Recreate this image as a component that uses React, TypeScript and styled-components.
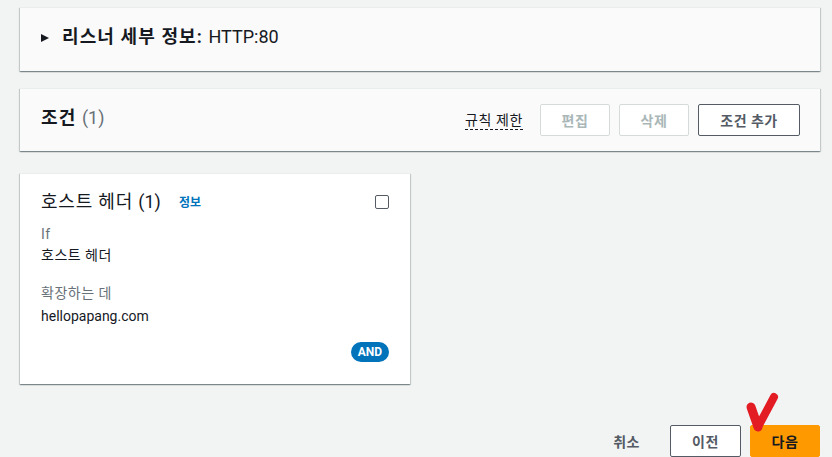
import React from "react";
import styled, { createGlobalStyle } from "styled-components";

const GlobalStyle = createGlobalStyle`
  html, body {
    margin: 0;
    padding: 0;
    background: #f2f3f3;
    font-family: Roboto, "Noto Sans CJK KR", sans-serif;
    color: #16191f;
  }
`;

const Page = styled.div`
  position: relative;
  width: 832px;
  height: 457px;
  overflow: hidden;
  box-sizing: border-box;
  padding: 7px 12px 0 20px;
`;

const Panel = styled.div<{ $white?: boolean }>`
  box-sizing: border-box;
  background: ${(p) => (p.$white ? "#ffffff" : "#fafafa")};
  border-top: 1px solid #eaeded;
  box-shadow: 0 1px 1px 0 rgba(0, 28, 36, 0.3),
    1px 1px 1px 0 rgba(0, 28, 36, 0.15), -1px 1px 1px 0 rgba(0, 28, 36, 0.15);
`;

const DetailPanel = styled(Panel)`
  height: 64px;
  display: flex;
  align-items: center;
  gap: 13px;
  padding: 0 21px 5px;
`;

const Caret = styled.span`
  width: 0;
  height: 0;
  border-top: 4px solid transparent;
  border-bottom: 4px solid transparent;
  border-left: 8px solid #16191f;
  margin-top: 2px;
`;

// hangul in the reference runs a touch wider than Noto CJK, hence the spacing
const HeadingText = styled.h2`
  margin: 0;
  font-size: 18px;
  font-weight: 700;
  line-height: 22px;
  letter-spacing: 1.1px;
  color: #16191f;
`;

const Latin = styled.span`
  letter-spacing: 0;
`;

const HeadingValue = styled(Latin)`
  font-weight: 400;
  color: #16191f;
`;

const Count = styled(Latin)`
  font-weight: 400;
  color: #687078;
`;

const ConditionPanel = styled(Panel)`
  height: 63px;
  margin-top: 17px;
  display: flex;
  align-items: center;
  justify-content: space-between;
  padding: 0 20px 0 21px;
`;

const ConditionTitle = styled(HeadingText)`
  margin-bottom: 5px;
`;

const Actions = styled.div`
  display: flex;
  align-items: center;
  gap: 9px;
  margin-bottom: 1px;
`;

const RuleLimit = styled.span`
  font-size: 14px;
  line-height: 18px;
  letter-spacing: 0.6px;
  color: #16191f;
  border-bottom: 1px dashed #16191f;
  margin-right: 8px;
  margin-top: 2px;
`;

const Button = styled.button<{ $variant?: "disabled" | "normal" | "primary" | "link"; $w?: number }>`
  box-sizing: border-box;
  height: 32px;
  width: ${(p) => (p.$w ? `${p.$w}px` : "auto")};
  padding: 0 20px;
  border-radius: 2px;
  font-family: inherit;
  font-size: 14px;
  font-weight: 700;
  letter-spacing: 0.5px;
  cursor: pointer;
  border: 1px solid
    ${(p) =>
      p.$variant === "disabled"
        ? "#d5dbdb"
        : p.$variant === "primary"
        ? "#ff9900"
        : p.$variant === "link"
        ? "transparent"
        : "#545b64"};
  background: ${(p) =>
    p.$variant === "primary" ? "#ff9900" : p.$variant === "link" ? "transparent" : "#ffffff"};
  color: ${(p) =>
    p.$variant === "disabled" ? "#aab7b8" : p.$variant === "primary" ? "#16191f" : "#545b64"};
`;

const Card = styled(Panel)`
  width: 390px;
  height: 211px;
  margin-top: 22px;
  padding: 16px 21px 0 21px;
  display: flex;
  flex-direction: column;
`;

const CardHeader = styled.div`
  display: flex;
  align-items: center;
  justify-content: space-between;
  height: 24px;
`;

const CardTitle = styled.div`
  display: flex;
  align-items: center;
  gap: 18px;
  font-size: 18px;
  line-height: 24px;
  letter-spacing: 0.8px;
  color: #16191f;
`;

const InfoLink = styled.span`
  font-size: 12px;
  font-weight: 700;
  letter-spacing: 0;
  color: #0073bb;
  margin-top: 2px;
`;

const Checkbox = styled.span`
  box-sizing: border-box;
  width: 14px;
  height: 14px;
  border: 1.5px solid #545b64;
  border-radius: 2px;
  margin-top: 0;
`;

const Label = styled.div<{ $top: number }>`
  margin-top: ${(p) => p.$top}px;
  font-size: 14px;
  line-height: 20px;
  letter-spacing: 0.5px;
  color: #687078;
`;

const Value = styled.div<{ $top: number }>`
  margin-top: ${(p) => p.$top}px;
  font-size: 14px;
  line-height: 20px;
  letter-spacing: 0.5px;
  color: #16191f;
`;

const CardFooter = styled.div`
  display: flex;
  justify-content: flex-end;
  margin-top: 16px;
`;

const Badge = styled.span`
  display: inline-flex;
  align-items: center;
  justify-content: center;
  height: 20px;
  padding: 0 7px;
  border-radius: 10px;
  background: #0073bb;
  color: #ffffff;
  font-size: 12px;
  font-weight: 700;
`;

const Footer = styled.div`
  display: flex;
  justify-content: flex-end;
  align-items: center;
  gap: 9px;
  margin-top: 41px;
`;

const CheckMark = styled.svg`
  position: absolute;
  left: 740px;
  top: 388px;
  pointer-events: none;
`;

export default function App() {
  return (
    <>
      <GlobalStyle />
      <Page>
        <DetailPanel>
          <Caret />
          <HeadingText>
            리스너 세부 정보: <HeadingValue>HTTP:80</HeadingValue>
          </HeadingText>
        </DetailPanel>

        <ConditionPanel>
          <ConditionTitle>
            조건 <Count>(1)</Count>
          </ConditionTitle>
          <Actions>
            <RuleLimit>규칙 제한</RuleLimit>
            <Button $variant="disabled" $w={70}>
              편집
            </Button>
            <Button $variant="disabled" $w={70}>
              삭제
            </Button>
            <Button $variant="normal" $w={102}>
              조건 추가
            </Button>
          </Actions>
        </ConditionPanel>

        <Card $white>
          <CardHeader>
            <CardTitle>
              <span>
                호스트 헤더 <Latin>(1)</Latin>
              </span>
              <InfoLink>정보</InfoLink>
            </CardTitle>
            <Checkbox />
          </CardHeader>
          <Label $top={10}>If</Label>
          <Value $top={1}>호스트 헤더</Value>
          <Label $top={18}>확장하는 데</Label>
          <Value $top={3}>
            <Latin>hellopapang.com</Latin>
          </Value>
          <CardFooter>
            <Badge>AND</Badge>
          </CardFooter>
        </Card>

        <Footer>
          <Button $variant="link">취소</Button>
          <Button $variant="normal" $w={71}>
            이전
          </Button>
          <Button $variant="primary" $w={70}>
            다음
          </Button>
        </Footer>

        <CheckMark width="44" height="46" viewBox="0 0 44 46">
          <path
            d="M11 19 L18 39"
            fill="none"
            stroke="#e31b23"
            strokeWidth="9"
            strokeLinecap="round"
          />
          <path
            d="M18 39 L34 9"
            fill="none"
            stroke="#e31b23"
            strokeWidth="8"
            strokeLinecap="round"
          />
        </CheckMark>
      </Page>
    </>
  );
}
